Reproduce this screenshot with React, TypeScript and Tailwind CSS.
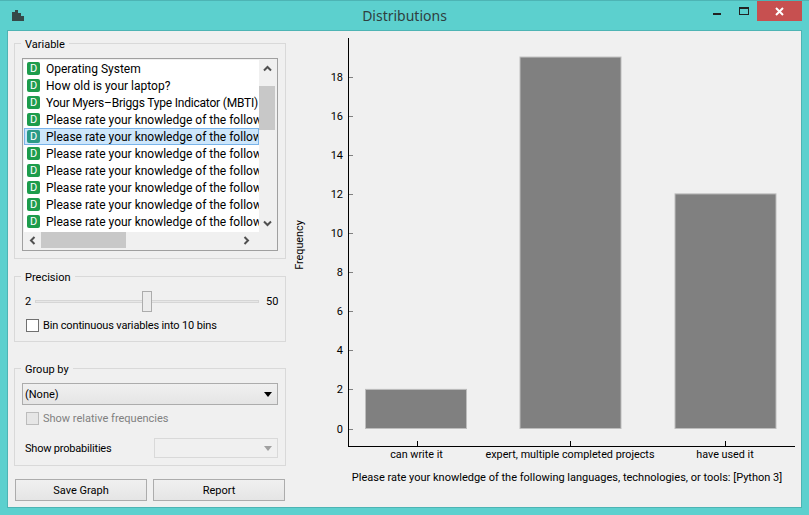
const font = "font-['Roboto','Noto_Sans',sans-serif]";

function Group({ title, className, children }: { title: string; className: string; children: React.ReactNode }) {
  return (
    <div className={`relative border border-[#d9d9d9] ${className}`}>
      <span className="absolute left-[6px] top-[-7px] bg-[#f0f0f0] px-[4px] text-[11px] leading-[16px] text-black">{title}</span>
      {children}
    </div>
  );
}

function Chevron({ dir }: { dir: "up" | "down" | "left" | "right" }) {
  const d = { up: "M1 6.5 L4.5 3 L8 6.5", down: "M1 2.5 L4.5 6 L8 2.5", left: "M6.5 1 L3 4.5 L6.5 8", right: "M2.5 1 L6 4.5 L2.5 8" }[dir];
  return (
    <svg width="9" height="9" viewBox="0 0 9 9" className="shrink-0">
      <path d={d} fill="none" stroke="#505050" strokeWidth="2" />
    </svg>
  );
}

const rows = [
  "Operating System",
  "How old is your laptop?",
  "Your Myers–Briggs Type Indicator (MBTI)",
  ...Array(7).fill("Please rate your knowledge of the following languages"),
];

function ListRow({ text, selected, tight }: { text: string; selected: boolean; tight: boolean }) {
  return (
    <div className={`flex h-[17px] items-center overflow-hidden whitespace-nowrap ${selected ? "border border-[#7ab4ea] bg-[#cde6fb]" : ""}`}>
      <span className={`flex h-[13px] w-[13px] shrink-0 items-center justify-center rounded-[2px] text-[11px] leading-none text-white ${selected ? "ml-[2px] bg-[#2a9a86]" : "ml-[3px] bg-[#1d9c4c]"}`}>D</span>
      <span className={`ml-[6px] text-[12px] leading-[16px] text-black ${tight ? "tracking-[-0.2px]" : ""}`}>{text}</span>
    </div>
  );
}

function Button({ label }: { label: string }) {
  return (
    <div className="flex h-[22px] w-[132px] items-center justify-center border border-[#acacac] bg-gradient-to-b from-[#f0f0f0] to-[#e5e5e5] pt-[2px] text-[11px] text-black">{label}</div>
  );
}

function Chart() {
  const y = (v: number) => 428.5 - v * 19.55;
  const bars = [
    { x: 365.5, v: 2, label: "can write it", c: 417 },
    { x: 520, v: 19, label: "expert, multiple completed projects", c: 570.5 },
    { x: 675, v: 12, label: "have used it", c: 725.5 },
  ];
  const ox = 290, oy = 31;
  return (
    <svg width="511" height="476" viewBox={`${ox} ${oy} 511 476`} className="block">
      {bars.map((b) => (
        <rect key={b.x} x={b.x} y={y(b.v)} width="101" height={b.v * 19.55} fill="#808080" stroke="#bdbdbd" strokeWidth="1" />
      ))}
      <line x1="348.5" y1="38" x2="348.5" y2="447" stroke="#000" />
      <line x1="348" y1="446.5" x2="795" y2="446.5" stroke="#000" />
      {[0, 2, 4, 6, 8, 10, 12, 14, 16, 18].map((v) => (
        <g key={v}>
          <line x1="349" x2="353" y1={Math.round(y(v)) + 0.5} y2={Math.round(y(v)) + 0.5} stroke="#808080" />
          <text x="343" y={y(v) + 4} textAnchor="end" fontSize="11" fill="#000">{v}</text>
        </g>
      ))}
      {bars.map((b) => (
        <g key={b.label}>
          <line x1={Math.floor(b.c) + 0.5} x2={Math.floor(b.c) + 0.5} y1="441" y2="446" stroke="#000" />
          <text x={b.c - 0.5} y="458" textAnchor="middle" fontSize="10.8" fill="#000">{b.label}</text>
        </g>
      ))}
      <text x="567" y="481" textAnchor="middle" fontSize="11" fill="#000">Please rate your knowledge of the following languages, technologies, or tools: [Python 3]</text>
      <text transform="translate(303 245) rotate(-90)" textAnchor="middle" fontSize="10.8" fill="#000">Frequency</text>
    </svg>
  );
}

export default function App() {
  return (
    <div className={`flex h-[515px] w-[809px] flex-col overflow-hidden border-t border-[#4db4b4] bg-[#5cd0ce] ${font}`}>
      <div className="relative flex h-[29px] shrink-0 items-center justify-center pt-[1px]">
        <svg width="12" height="11" viewBox="0 0 12 11" className="absolute left-[12px] top-[9px]">
          <path d="M0 2h3v9H0zM3 0h3v11H3zM6 3h3v8H6zM9 6h3v5H9z" fill="#364848" />
        </svg>
        <span className="font-['Noto_Sans',sans-serif] text-[14px] leading-[20px] text-[#2f3f3f]">Distributions</span>
        <div className="absolute left-[713px] top-[12px] h-[2px] w-[8px] bg-[#222]" />
        <div className="absolute left-[739px] top-[6px] h-[8px] w-[10px] border border-t-2 border-[#222]" />
        <div className="absolute left-[757px] top-0 flex h-[20px] w-[45px] items-center justify-center bg-[#c75050]">
          <svg width="9" height="9" viewBox="0 0 9 9"><path d="M1 1 L8 8 M8 1 L1 8" stroke="#fff" strokeWidth="2" /></svg>
        </div>
      </div>
      <div className="mx-[7px] mb-[7px] flex min-h-0 flex-1 border border-[#4db4b4] bg-[#f0f0f0]">
        <div className="flex w-[282px] shrink-0 flex-col pl-[6px] pt-[12px]">
          <Group title="Variable" className="h-[216px] w-[272px] p-[7px] pt-[14px]">
            <div className="flex h-[193px] flex-col border border-[#a0a0a0] bg-[#f0f0f0] pb-[2px] pl-[1px] pr-[2px] pt-[1px]">
              <div className="flex min-h-0 flex-1">
                <div className="min-w-0 flex-1 overflow-hidden bg-white">
                  {rows.map((r, i) => <ListRow key={i} text={r} selected={i === 4} tight={i === 2} />)}
                </div>
                <div className="flex w-[16px] shrink-0 flex-col items-center bg-[#f0f0f0]">
                  <div className="flex h-[17px] w-full items-center justify-center"><Chevron dir="up" /></div>
                  <div className="mt-[9px] h-[44px] w-full bg-[#c8c8c8]" />
                  <div className="mt-auto flex h-[17px] w-full items-center justify-center"><Chevron dir="down" /></div>
                </div>
              </div>
              <div className="flex h-[16px] shrink-0 items-center bg-[#f0f0f0]">
                <div className="flex w-[17px] justify-center"><Chevron dir="left" /></div>
                <div className="h-full w-[85px] bg-[#c8c8c8]" />
                <div className="ml-auto mr-[20px] flex w-[18px] justify-center"><Chevron dir="right" /></div>
              </div>
            </div>
          </Group>
          <Group title="Precision" className="mt-[17px] h-[66px] w-[272px] pl-[10px] pt-[10px]">
            <div className="flex h-[28px] items-center text-[11px] text-black">
              <span className="w-[10px] shrink-0 pt-[2px]">2</span>
              <div className="relative h-[3px] w-[224px] shrink-0 border border-[#d6d6d6] bg-[#e7e7e7]">
                <div className="absolute left-[106px] top-[-10px] h-[21px] w-[10px] border border-[#acacac] bg-[#ececec]" />
              </div>
              <span className="ml-[7px] pt-[2px]">50</span>
            </div>
            <div className="mt-[2px] flex h-[16px] items-center">
              <div className="ml-[1px] h-[13px] w-[13px] border border-[#707070] bg-white" />
              <span className="ml-[4px] pt-[2px] text-[11px] leading-[16px] tracking-[-0.15px] text-black">Bin continuous variables into 10 bins</span>
            </div>
          </Group>
          <Group title="Group by" className="mt-[26px] h-[98px] w-[272px] px-[7px] pt-[14px]">
            <div className="flex h-[22px] items-center justify-between border border-[#acacac] bg-gradient-to-b from-[#f0f0f0] to-[#e5e5e5] pl-[2px] pr-[5px] text-[11px] text-black">
              <span className="pt-[2px]">(None)</span>
              <svg width="8" height="5" viewBox="0 0 8 5"><path d="M0 0h8L4 5z" fill="#000" /></svg>
            </div>
            <div className="mt-[5px] flex h-[16px] items-center">
              <div className="ml-[4px] h-[13px] w-[13px] border border-[#bcbcbc] bg-[#e6e6e6]" />
              <span className="ml-[4px] pt-[2px] text-[11px] leading-[16px] text-[#808080]">Show relative frequencies</span>
            </div>
            <div className="mt-[12px] flex items-center justify-between">
              <span className="ml-[3px] pt-[2px] text-[11px] leading-[16px] tracking-[-0.2px] text-black">Show probabilities</span>
              <div className="flex h-[20px] w-[124px] items-center justify-end border border-[#d9d9d9] pr-[5px]">
                <svg width="8" height="5" viewBox="0 0 8 5"><path d="M0 0h8L4 5z" fill="#a0a0a0" /></svg>
              </div>
            </div>
          </Group>
          <div className="mt-[13px] flex w-[272px] justify-between px-[1px]">
            <Button label="Save Graph" />
            <Button label="Report" />
          </div>
        </div>
        <div className="min-w-0 flex-1">
          <Chart />
        </div>
      </div>
    </div>
  );
}
